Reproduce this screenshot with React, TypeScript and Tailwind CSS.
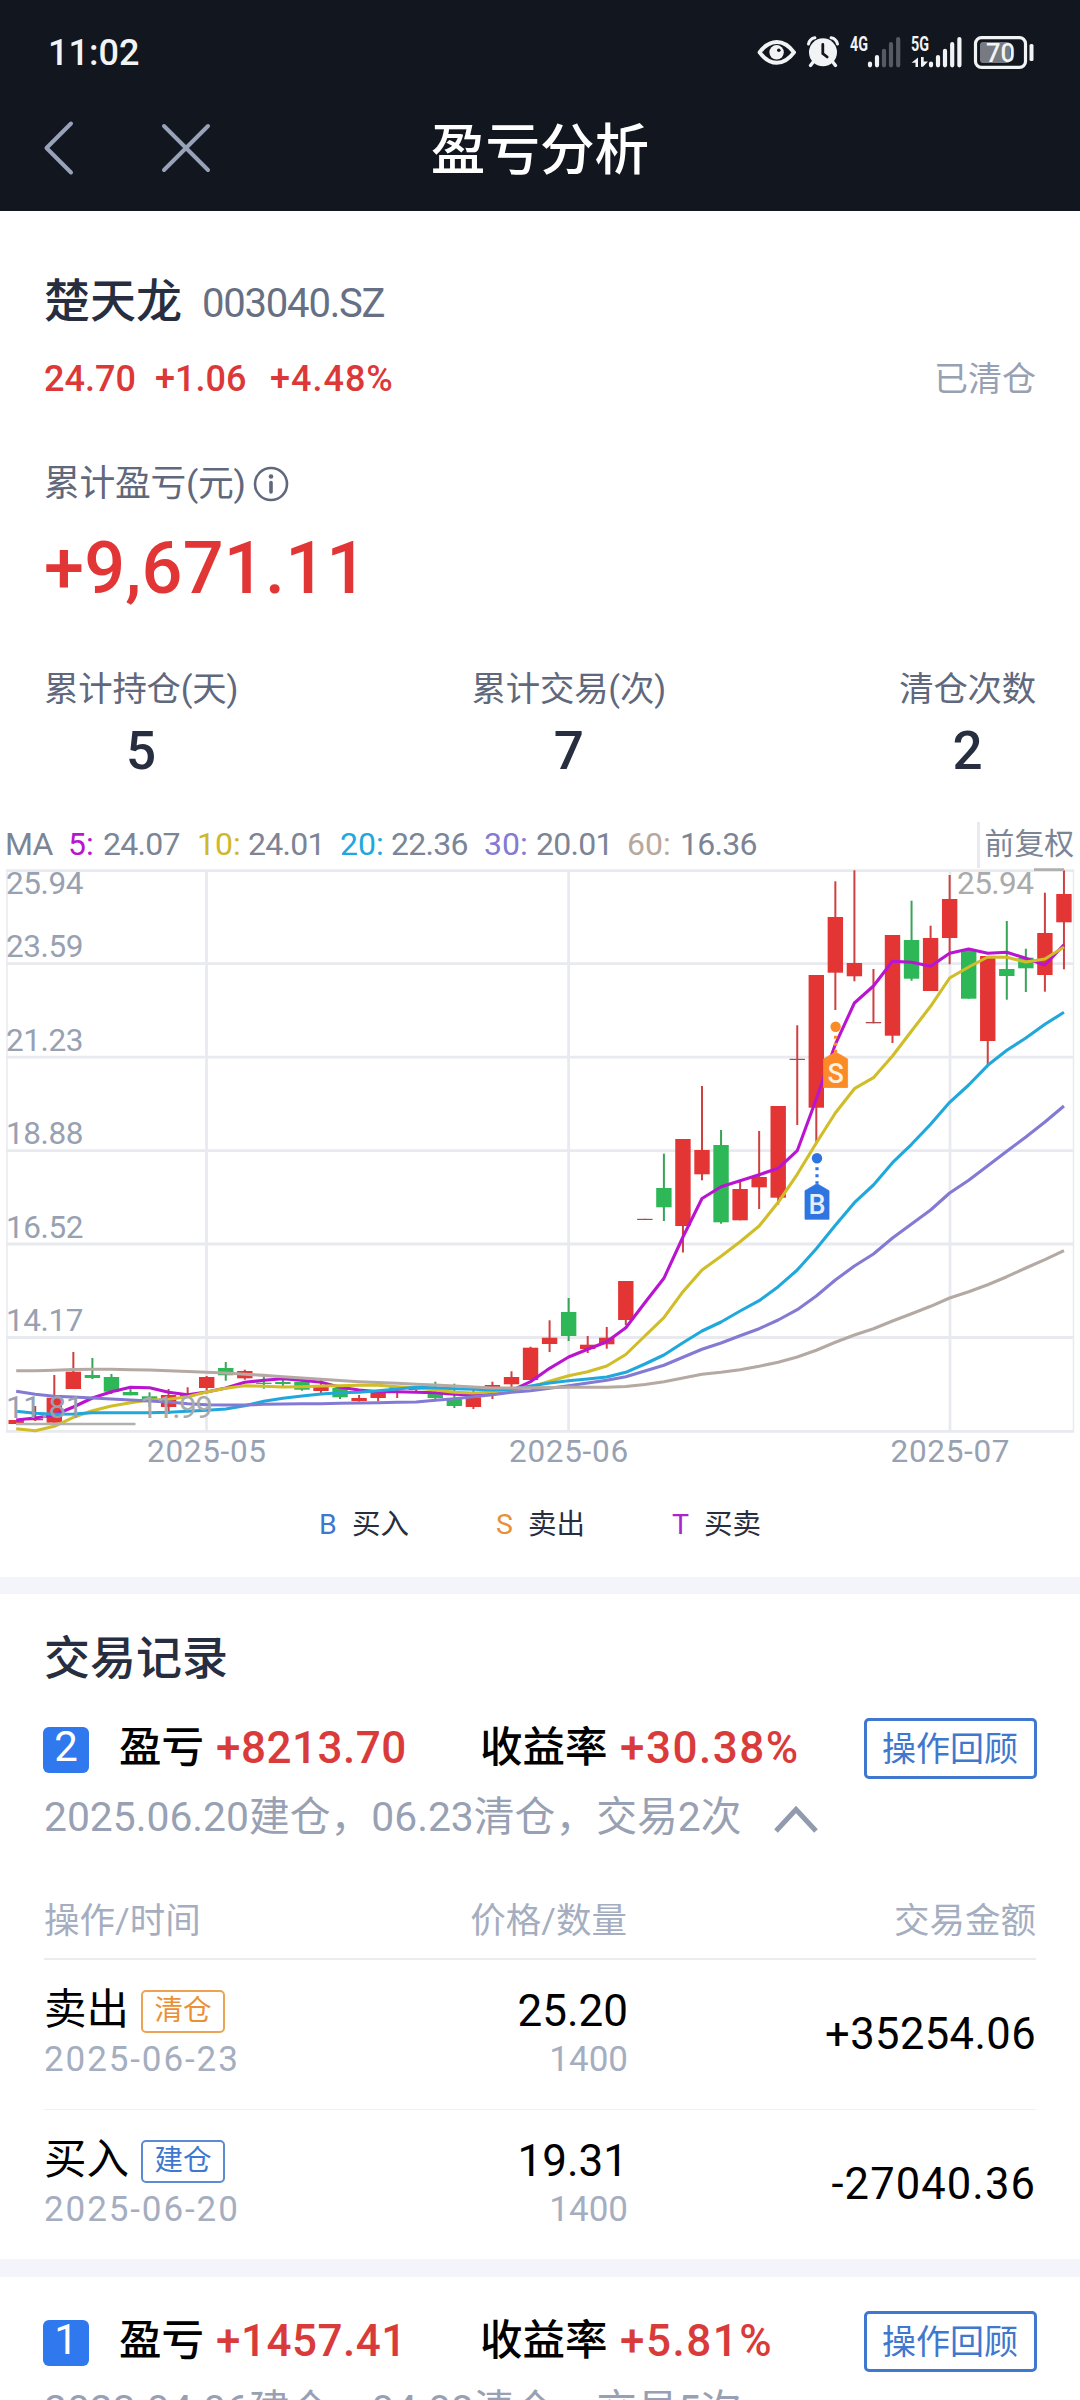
import React from "react";

type Candle = {
  color: "r" | "g";
  top: number;
  bottom: number;
  high: number;
  low: number;
};

const c = (color: "r" | "g", top: number, bottom: number, high = top, low = bottom): Candle => ({
  color,
  top,
  bottom,
  high,
  low,
});

const candles: Candle[] = [
  c("r", 1420, 1424),
  c("r", 1418.7, 1420.3, 1406, 1421),
  c("r", 1397.7, 1422.7, 1375),
  c("r", 1371.7, 1389, 1352),
  c("g", 1375, 1378, 1358, 1379),
  c("g", 1377, 1391.7, 1374, 1394),
  c("g", 1392, 1395.3, 1388),
  c("g", 1396.3, 1400, 1392.3, 1406.7),
  c("r", 1395, 1407, 1389, 1414),
  c("r", 1394.5, 1396.3, 1387.3),
  c("r", 1377, 1388, 1376, 1390),
  c("g", 1368, 1375.3, 1362, 1380.7),
  c("r", 1371, 1378.3, 1369.7, 1379.7),
  c("g", 1382.7, 1384, 1376.7, 1388.7),
  c("g", 1382, 1384, 1378, 1388),
  c("g", 1381.7, 1389.7, 1381, 1390.7),
  c("r", 1386, 1391, 1380, 1393),
  c("g", 1388, 1397.3, 1388, 1399),
  c("r", 1398, 1401, 1395, 1401.7),
  c("r", 1392.3, 1398, 1392.3, 1401.3),
  c("r", 1387, 1388.5, 1387, 1398),
  c("r", 1388, 1390, 1388, 1391),
  c("g", 1392.3, 1398, 1381.7, 1399.3),
  c("g", 1399, 1406, 1383.7, 1408),
  c("r", 1397.3, 1407, 1386.7, 1409),
  c("r", 1385, 1387.7, 1381.7, 1399),
  c("r", 1377, 1384.3, 1371.3, 1387.3),
  c("r", 1347.7, 1380, 1346.7),
  c("r", 1337.7, 1344, 1320.3, 1352),
  c("g", 1312, 1336, 1298, 1341),
  c("r", 1344.7, 1349, 1336, 1353),
  c("r", 1337.7, 1344.3, 1327, 1348.7),
  c("r", 1281, 1320, 1281, 1325),
  c("r", 1218.8, 1220),
  c("g", 1188, 1207.3, 1153.7, 1221),
  c("r", 1139, 1226, 1139, 1252.5),
  c("r", 1150, 1174.3, 1086, 1180.3),
  c("g", 1145, 1222.3, 1130, 1223.7),
  c("r", 1189, 1220.3, 1180.7),
  c("r", 1177, 1187.3, 1131, 1209),
  c("r", 1106, 1197.7, 1106, 1204.7),
  c("r", 1058.8, 1060, 1025.3, 1125),
  c("r", 975, 1107.7, 975, 1143),
  c("r", 917, 972.7, 881.3, 1010),
  c("r", 963, 976.3, 870.3, 981.3),
  c("r", 1022, 1023.3, 969),
  c("r", 935, 1035.7, 935, 1043),
  c("g", 940, 978.7, 900.7, 980.7),
  c("r", 938, 991, 925.7),
  c("r", 899, 938, 875, 964.3),
  c("g", 949.3, 998.7),
  c("r", 956, 1041, 956, 1065),
  c("g", 969, 976, 921, 999.7),
  c("g", 957.7, 968.3, 948.7, 992),
  c("r", 933, 975, 892.7, 991.7),
  c("r", 894, 922.3, 870.3, 969.3),
];

const series: { color: string; values: number[] }[] = [
  {
    color: "#b915d0",
    values: [
      1420, 1418, 1415, 1407, 1398, 1391.7, 1387.3, 1387.7, 1392.3, 1394.7, 1392, 1388, 1382.3, 1380.3, 1378.7, 1380.3,
      1382.3, 1387.3, 1390, 1391.7, 1391.7, 1392.3, 1392.7, 1394.3, 1395, 1393, 1390.7, 1381.7, 1368.3, 1357, 1349.3,
      1341.7, 1327.7, 1302.7, 1278.3, 1237, 1198.5, 1186.7, 1180.7, 1174.7, 1168.3, 1150.7, 1099, 1044.3, 1003, 986,
      961.3, 962.3, 966.3, 953.3, 949, 953.3, 952.3, 958.3, 965, 944.7,
    ],
  },
  {
    color: "#d0bd28",
    values: [
      1428.7, 1430.7, 1426.3, 1417.3, 1410.7, 1406, 1402.7, 1400, 1399.3, 1396.7, 1392, 1388.3, 1385.7, 1386.3, 1387,
      1386.7, 1386, 1385.7, 1385.3, 1385.3, 1386.7, 1388, 1390, 1392.3, 1393, 1392, 1390, 1387.3, 1381.3, 1375.7,
      1371.7, 1366, 1354.5, 1336, 1317.7, 1291.7, 1270, 1256.3, 1241.7, 1226, 1202.3, 1174.3, 1143, 1113, 1088.7,
      1077.7, 1056, 1031, 1006.3, 978, 967, 957, 957.3, 962, 959, 947,
    ],
  },
  {
    color: "#20a8dc",
    values: [
      1411.3, 1413.3, 1414.3, 1414, 1412.7, 1412.7, 1412.7, 1412.7, 1412.3, 1411.3, 1410.3, 1409, 1405.7, 1401.3,
      1398.3, 1396, 1394, 1392.7, 1392.3, 1390.7, 1389, 1387.3, 1387.7, 1388.7, 1389.3, 1390, 1389.3, 1386, 1383,
      1380.7, 1379, 1377, 1372.3, 1364, 1355, 1342.7, 1331, 1322, 1311, 1300.7, 1286.7, 1270, 1248.7, 1225.3, 1202.7,
      1185, 1162.7, 1144.3, 1124.3, 1102.3, 1085, 1065.3, 1050.3, 1038, 1024.3, 1012.3,
    ],
  },
  {
    color: "#837ad4",
    values: [
      1391.3, 1394.3, 1396.3, 1397, 1398, 1399, 1400, 1401, 1402, 1403.7, 1404.7, 1405, 1405, 1404.3, 1404, 1403.7,
      1403.7, 1403.3, 1403, 1402.7, 1402.3, 1402, 1400.3, 1398.7, 1396.7, 1394.7, 1392.3, 1390.7, 1388.3, 1385.7,
      1383, 1380.3, 1376.7, 1371, 1365.3, 1357.3, 1349.3, 1343, 1335.7, 1328.7, 1320, 1309.7, 1296, 1280, 1266, 1254,
      1238, 1224, 1210, 1193, 1180.3, 1165.7, 1151.3, 1137, 1122, 1106,
    ],
  },
  {
    color: "#b5a9a3",
    values: [
      1370.7, 1370.7, 1370.3, 1369.5, 1369.3, 1369.3, 1369.7, 1370, 1370.7, 1371.5, 1372.3, 1373, 1374.2, 1375.4,
      1376.7, 1378, 1379.3, 1380.5, 1381.7, 1382.5, 1383.3, 1384.2, 1385, 1386, 1387, 1388, 1388, 1387.8, 1387.5,
      1387.3, 1387.3, 1387.3, 1386.5, 1384.5, 1381.7, 1378, 1374.3, 1372.3, 1369.7, 1366.3, 1362.3, 1357, 1350.3,
      1342.3, 1335, 1328.7, 1321, 1313.7, 1306.3, 1298, 1291.7, 1284.7, 1276.7, 1268, 1259.7, 1250.7,
    ],
  },
];

const candleX = (i: number) => 16.2 + i * 19.05;

const priceLabels = [
  { text: "25.94", y: 894 },
  { text: "23.59", y: 957 },
  { text: "21.23", y: 1051 },
  { text: "18.88", y: 1144 },
  { text: "16.52", y: 1238 },
  { text: "14.17", y: 1331 },
  { text: "11.81", y: 1418 },
];

const monthLabels = [
  { text: "2025-05", x: 206.5 },
  { text: "2025-06", x: 568.6 },
  { text: "2025-07", x: 950 },
];

function Pin({ x, dotY, topY, color, label }: { x: number; dotY: number; topY: number; color: string; label: string }) {
  return (
    <g>
      <circle cx={x} cy={dotY} r="5.2" fill={color} />
      <path d={`M${x} ${dotY + 9}V${topY}`} stroke={color} strokeWidth="3.2" strokeDasharray="3 4" />
      <path
        d={`M${x} ${topY}l12 7v28.5h-24v-28.5z`}
        fill={color}
        stroke={color}
        strokeWidth="0.8"
        strokeLinejoin="round"
      />
      <text x={x} y={topY + 30.5} textAnchor="middle" fontSize="27" fontWeight="500" fill="#fff" fillOpacity="0.88">
        {label}
      </text>
    </g>
  );
}

function Chart() {
  return (
    <svg className="block h-[604px] w-[1080px] overflow-visible" viewBox="0 868 1080 604">
      <g stroke="#e8eaf0" strokeWidth="2.8">
        {[870.6, 963.6, 1057.2, 1150.6, 1244, 1337.5, 1431.4].map((y) => (
          <path key={y} d={`M6 ${y}H1074`} />
        ))}
        {monthLabels.map((m) => (
          <path key={m.x} d={`M${m.x} 870V1431`} />
        ))}
        <path d="M7 870V1432M1073.5 870V1432" strokeWidth="1.5" />
      </g>
      {candles.map((k, i) => {
        const x = candleX(i);
        const flat = k.bottom - k.top < 1.4;
        const wick = k.color === "r" ? "#cf4040" : "#38a457";
        const fill = flat && k.color === "r" ? "#b04a4a" : k.color === "r" ? "#e43535" : "#2db757";
        return (
          <g key={i}>
            <rect x={x - 1} y={k.high} width="2" height={Math.max(k.low - k.high, 0)} fill={wick} />
            <rect x={x - 7.7} y={k.top} width="15.4" height={k.bottom - k.top} fill={fill} />
          </g>
        );
      })}
      {series.map((s) => (
        <polyline
          key={s.color}
          points={s.values.map((v, i) => `${candleX(i)},${v}`).join(" ")}
          fill="none"
          stroke={s.color}
          strokeWidth="3.1"
          strokeLinejoin="round"
        />
      ))}
      <path d="M16 1424H135.5M1034 869.6H1064" stroke="#b0b0b0" strokeWidth="2.6" />
      <g fontSize="31.5">
        <g fill="#aaa">
          <text x="957" y="893.8" textLength="77">25.94</text>
          <text x="140" y="1417.5" textLength="73">11.99</text>
        </g>
        <g fill="#98a1b2">
          {priceLabels.map((l) => (
            <text key={l.text} x="6" y={l.y} textLength="77.5">
              {l.text}
            </text>
          ))}
          {monthLabels.map((m) => (
            <text key={m.text} x={m.x - 59.5} y="1461.5" textLength="119">
              {m.text}
            </text>
          ))}
        </g>
      </g>
      <Pin x={835.6} dotY={1026.7} topY={1052} color="#fb8b26" label="S" />
      <Pin x={817} dotY={1158.3} topY={1183.7} color="#2f75e2" label="B" />
    </svg>
  );
}

function StatusIcons() {
  return (
    <svg className="block h-[44px] w-[284px]" viewBox="754 30 284 44">
      <path
        d="M759.6 52.4c5-6.8 11-10.4 17.2-10.4s12.2 3.6 17.2 10.4c-5 6.8-11 10.4-17.2 10.4s-12.2-3.6-17.2-10.4z"
        fill="none"
        stroke="#f2f3f5"
        strokeWidth="4"
        strokeLinejoin="round"
      />
      <circle cx="776.6" cy="52.3" r="7.2" fill="#f2f3f5" />
      <circle cx="778.8" cy="50.2" r="1.8" fill="#12161f" />
      <g>
        <circle cx="823" cy="52.3" r="14" fill="#f2f3f5" />
        <path
          d="M808.5 44c.8-3.5 3-5.6 6.4-6.2M837.5 44c-.8-3.5-3-5.6-6.4-6.2"
          stroke="#f2f3f5"
          strokeWidth="3"
          strokeLinecap="round"
          fill="none"
        />
        <path d="M814 61l-3.5 4.5M832 61l3.5 4.5" stroke="#f2f3f5" strokeWidth="3.4" strokeLinecap="round" />
        <path d="M822.8 44.5v9l4.4 3.5" stroke="#12161f" strokeWidth="2.8" strokeLinecap="round" fill="none" />
      </g>
      <g fill="#f2f3f5" fontSize="19.5" fontWeight="700">
        <text x="850" y="51" textLength="18" lengthAdjust="spacingAndGlyphs">
          4G
        </text>
        <text x="911" y="51" textLength="18" lengthAdjust="spacingAndGlyphs">
          5G
        </text>
      </g>
      <g strokeWidth="4.2" strokeLinecap="round" stroke="#f2f3f5">
        <path d="M870 63.5v1.8M877 57v8.3" />
        <path d="M884 50.8v14.5M891 44.2v21.1M898.2 39v26.3" stroke="#565a63" />
        <path d="M931 63.5v1.8M938 57v8.3M945 50.8v14.5M952.2 44.2v21.1M959.4 39v26.3" />
      </g>
      <path d="M918 67V57.5l-6.5 5.2h4V67zM921 57v9.8h2l5-5.2h-4.3V57z" fill="#f2f3f5" />
      <rect x="975.5" y="37.6" width="50" height="29.8" rx="6" fill="none" stroke="#f2f3f5" strokeWidth="3.2" />
      <rect x="980" y="42" width="30" height="21" rx="3" fill="#777a80" />
      <rect x="1029.5" y="44" width="4" height="17" rx="1.5" fill="#f2f3f5" />
      <text
        x="986"
        y="61.5"
        textLength="29"
        lengthAdjust="spacingAndGlyphs"
        fontSize="26"
        fontWeight="500"
        fill="#f2f3f5"
      >
        70
      </text>
    </svg>
  );
}

function Header() {
  return (
    <header className="h-[211px] bg-[#12161f]">
      <div className="flex h-[104px] items-center justify-between pl-[48px] pr-[42px]">
        <span className="mt-[2px] text-[36px] font-medium text-[#f2f3f5]">11:02</span>
        <StatusIcons />
      </div>
      <div className="grid h-[88px] grid-cols-[1fr_auto_1fr] items-center">
        <div className="flex items-center pl-[42px]">
          <svg className="h-[56px] w-[32px]" viewBox="0 0 32 56" fill="none" stroke="#98a2b8" strokeWidth="4">
            <path d="M29 3.5L4.5 28L29 52.5" strokeLinecap="round" strokeLinejoin="round" />
          </svg>
          <svg className="ml-[87px] h-[50px] w-[50px]" viewBox="0 0 50 50" fill="none" stroke="#98a2b8" strokeWidth="4">
            <path d="M3 3L47 47M47 3L3 47" strokeLinecap="round" />
          </svg>
        </div>
        <h1 className="pt-[4px] text-[54.6px] font-medium leading-[84px] text-white">盈亏分析</h1>
        <div />
      </div>
    </header>
  );
}

function Stat({ label, value }: { label: string; value: string }) {
  return (
    <div className="flex flex-col items-center">
      <span className="text-[34.4px] leading-[44px] tracking-[-0.2px] text-[#5f687c]">{label}</span>
      <span className="mt-[10px] text-[53px] font-medium leading-[60px] text-[#272e40]">{value}</span>
    </div>
  );
}

function Summary() {
  return (
    <section className="px-[44px] pt-[60px]">
      <div className="flex h-[60px] items-baseline">
        <span className="text-[46px] font-medium leading-[60px] text-[#272e40]">楚天龙</span>
        <span className="ml-[20px] text-[40px] leading-[62px] tracking-[-1.2px] text-[#667085]">003040.SZ</span>
      </div>
      <div className="mt-[23px] flex h-[50px] items-center justify-between">
        <div className="flex text-[36px] font-medium leading-[50px] text-[#dc3838]">
          <span className="w-[111px]">24.70</span>
          <span className="w-[115px]">+1.06</span>
          <span className="tracking-[1px]">+4.48%</span>
        </div>
        <span className="text-[34px] leading-[50px] text-[#98a1b3]">已清仓</span>
      </div>
      <div className="mt-[55px] flex h-[50px] items-center text-[#5f687c]">
        <span className="text-[35.8px] leading-[50px] tracking-[-0.3px]">累计盈亏(元)</span>
        <svg className="ml-[7px] h-[36px] w-[36px]" viewBox="0 0 36 36" fill="none" stroke="#5f687c">
          <circle cx="18" cy="18" r="16" strokeWidth="2.6" />
          <path d="M18 16.5V26" strokeWidth="3.6" strokeLinecap="round" />
          <circle cx="18" cy="10.5" r="2.3" fill="#5f687c" stroke="none" />
        </svg>
      </div>
      <div className="mt-[15px] h-[89px] text-[72px] font-medium leading-[90px] tracking-[0.2px] text-[#e23636]">
        +9,671.11
      </div>
      <div className="mt-[54px] flex justify-between">
        <Stat label="累计持仓(天)" value="5" />
        <Stat label="累计交易(次)" value="7" />
        <Stat label="清仓次数" value="2" />
      </div>
    </section>
  );
}

const averages = [
  { name: "5:", value: "24.07", tone: "text-[#b915d0]", width: "w-[129px]", gap: "w-[35px]" },
  { name: "10:", value: "24.01", tone: "text-[#cfb82a]", width: "w-[143px]", gap: "w-[51px]" },
  { name: "20:", value: "22.36", tone: "text-[#20a8dc]", width: "w-[144px]", gap: "w-[51px]" },
  { name: "30:", value: "20.01", tone: "text-[#837ad4]", width: "w-[143px]", gap: "w-[52px]" },
  { name: "60:", value: "16.36", tone: "text-[#b8a89c]", width: "w-[140px]", gap: "w-[53px]" },
];

function MovingAverages() {
  return (
    <div className="mt-[41px] flex h-[46px] items-stretch text-[32px] leading-[44px] text-[#7b8596]">
      <span className="w-[68px] pl-[5px] tracking-[-0.8px]">MA</span>
      {averages.map((a) => (
        <span key={a.name} className={`flex ${a.width}`}>
          <span className={`${a.tone} ${a.gap}`}>{a.name}</span>
          <span className="tracking-[-0.7px]">{a.value}</span>
        </span>
      ))}
      <span className="ml-auto border-l-[3px] border-[#e8eaf0] pl-[5px] pr-[6px] text-[29.8px]">前复权</span>
    </div>
  );
}

function Legend() {
  return (
    <div className="flex h-[40px] pl-[319px] text-[28.5px] leading-[40px] text-[#272e40]">
      <span className="w-[177px]">
        <span className="inline-block w-[33px] text-[#3c78d0]">B</span>买入
      </span>
      <span className="w-[176px]">
        <span className="inline-block w-[32px] text-[#e99036]">S</span>卖出
      </span>
      <span>
        <span className="inline-block w-[32px] text-[#a925cf]">T</span>买卖
      </span>
    </div>
  );
}

function RecordHead(p: { index: string; profit: string; rate: string; summary: string; open?: boolean }) {
  return (
    <div className="px-[43px]">
      <div className="flex h-[61px] items-center text-[42px] leading-[58px] text-black">
        <span className="mt-[3px] h-[46px] w-[46px] rounded-[6px] bg-[#3078ed] text-center text-[42px] leading-[39px] text-white">
          {p.index}
        </span>
        <span className="-mt-[2px] ml-[30px] w-[97px] text-[42.5px] font-medium">盈亏</span>
        <span className="-mt-[2px] w-[264px] text-[44px] font-medium tracking-[0.5px] text-[#d93b3b]">{p.profit}</span>
        <span className="-mt-[2px] w-[140px] text-[42.5px] font-medium">收益率</span>
        <span className="-mt-[2px] text-[44px] font-medium tracking-[1.5px] text-[#d93b3b]">{p.rate}</span>
        <button className="ml-auto h-[61px] w-[173px] rounded-[5px] border-[3px] border-[#3f78ce] pr-px text-center text-[34px] leading-[56px] text-[#3f78ce]">
          操作回顾
        </button>
      </div>
      <div className="mt-[10px] flex h-[56px] items-center whitespace-nowrap pl-px text-[40.8px] leading-[56px] text-[#98a1b3]">
        <span>{p.summary}</span>
        {p.open && (
          <svg className="ml-[31px] mt-[4px] h-[30px] w-[46px]" viewBox="0 0 46 30" fill="none">
            <path d="M3 27L23 5.5L43 27" stroke="#929bae" strokeWidth="5" />
          </svg>
        )}
      </div>
    </div>
  );
}

function TradeRow(p: {
  action: string;
  tag: string;
  tagClass: string;
  date: string;
  price: string;
  quantity: string;
  amount: string;
  amountClass: string;
  rowClass: string;
}) {
  return (
    <div className={`flex h-[150px] ${p.rowClass}`}>
      <div className="w-[300px] pt-[25px]">
        <div className="flex h-[50px] items-center">
          <span className="text-[42.5px] leading-[52px] text-black">{p.action}</span>
          <span className={`ml-[12px] mt-[2px] h-[43px] w-[84px] rounded-[5px] border-2 text-center text-[28.5px] leading-[38px] ${p.tagClass}`}>
            {p.tag}
          </span>
        </div>
        <div className="text-[35px] leading-[49px] tracking-[1.9px] text-[#a5aec0]">{p.date}</div>
      </div>
      <div className="w-[284px] pt-[26px] text-right">
        <div className="text-[44px] leading-[50px] text-black">{p.price}</div>
        <div className="text-[35px] leading-[48px] text-[#a5aec0]">{p.quantity}</div>
      </div>
      <div className={`flex-1 text-right text-[43.5px] leading-[149px] text-black ${p.amountClass}`}>{p.amount}</div>
    </div>
  );
}

export default function App() {
  return (
    <div className="h-[2400px] w-[1080px] overflow-hidden bg-white font-['Roboto','Noto_Sans_CJK_SC',sans-serif]">
      <Header />
      <Summary />
      <MovingAverages />
      <Chart />
      <div className="pb-[32px] pt-[33px]">
        <Legend />
      </div>
      <div className="h-[17px] bg-[#f4f5fa]" />
      <h2 className="mb-[30px] mt-[34px] px-[44px] text-[46px] font-medium leading-[60px] text-[#272e40]">交易记录</h2>
      <RecordHead
        index="2"
        profit="+8213.70"
        rate="+30.38%"
        summary="2025.06.20建仓，06.23清仓，交易2次"
        open
      />
      <div className="px-[44px]">
        <div className="mt-[51px] flex h-[64px] border-b-2 border-[#ebecef] text-[35.5px] leading-[50px] text-[#a5aec0]">
          <span className="w-[300px]">操作/时间</span>
          <span className="w-[283px] text-right">价格/数量</span>
          <span className="flex-1 text-right">交易金额</span>
        </div>
        <TradeRow
          action="卖出"
          tag="清仓"
          tagClass="border-[#eba455] text-[#ea9135]"
          date="2025-06-23"
          price="25.20"
          quantity="1400"
          amount="+35254.06"
          amountClass="tracking-[0.4px]"
          rowClass="border-b border-[#eff0f3]"
        />
        <TradeRow
          action="买入"
          tag="建仓"
          tagClass="border-[#5a8bd4] text-[#3f78ce]"
          date="2025-06-20"
          price="19.31"
          quantity="1400"
          amount="-27040.36"
          amountClass="tracking-[1.1px]"
          rowClass=""
        />
      </div>
      <div className="-mt-px mb-[34px] h-[18px] bg-[#f4f5fa]" />
      <RecordHead
        index="1"
        profit="+1457.41"
        rate="+5.81%"
        summary="2023.04.06建仓，04.08清仓，交易5次"
      />
    </div>
  );
}
